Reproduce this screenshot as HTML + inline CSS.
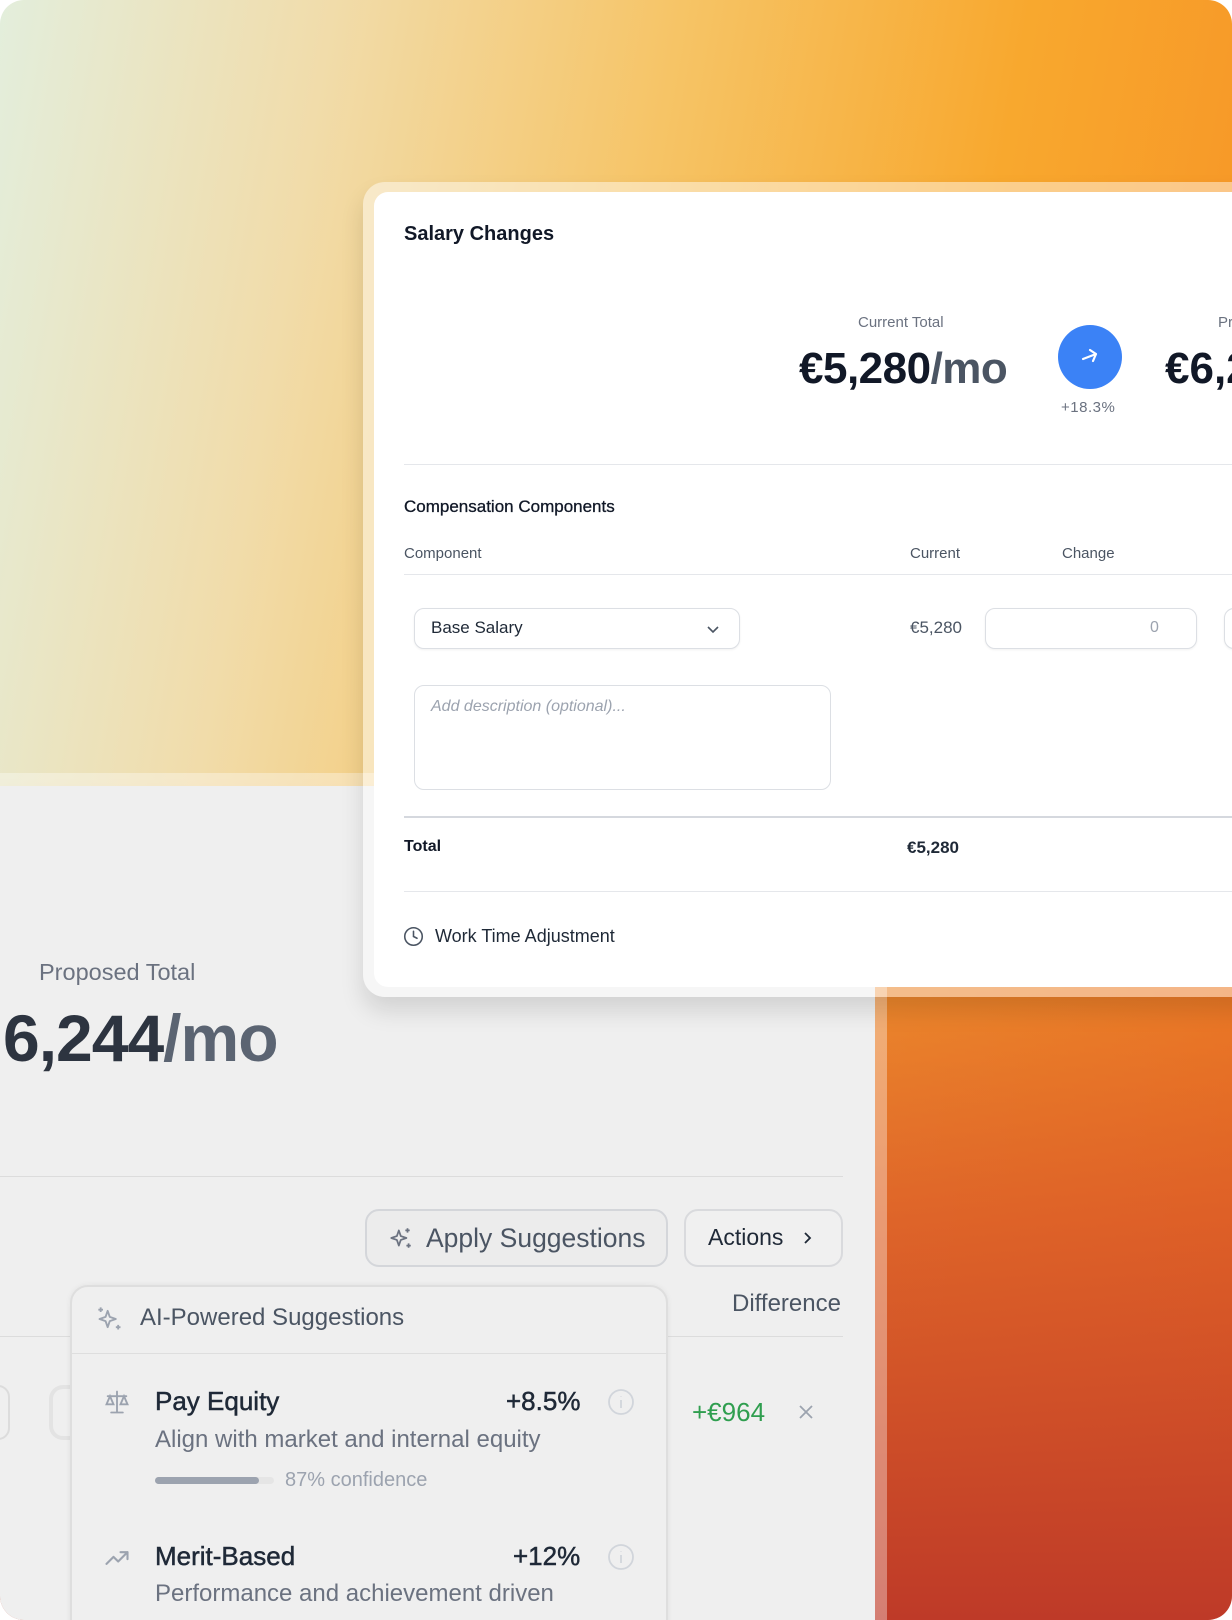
<!DOCTYPE html>
<html><head><meta charset="utf-8"><style>
*{box-sizing:border-box;margin:0;padding:0}
html,body{width:1232px;height:1620px;background:#fff;overflow:hidden;font-family:"Liberation Sans",sans-serif}
.wrap{position:absolute;left:0;top:0;width:1232px;height:1620px;border-radius:24px;overflow:hidden;
background:linear-gradient(to bottom,rgba(0,0,0,0) 48%,rgba(214,80,40,.75) 75%,rgba(190,58,40,1) 100%),linear-gradient(100deg,#e3eedc 0%,#f1dcaa 22%,#f6c466 45%,#f8a82e 68%,#f68a22 100%)}
.panel{position:absolute;left:0;top:773px;width:887px;height:900px;background:rgba(255,255,255,.35)}
.panel2{position:absolute;left:0;top:786px;width:875px;height:900px;background:#efefef}
.abs{position:absolute;white-space:nowrap}
.card{position:absolute;left:363px;top:182px;width:900px;height:815px;border-radius:22px;background:rgba(255,255,255,.45);box-shadow:0 14px 24px rgba(0,0,0,.12)}
.inner{position:absolute;left:374px;top:192px;width:900px;height:795px;border-radius:14px;background:#fff}
.hr{position:absolute;height:1px;background:#e5e7eb}
.dark{color:#111827}
.gray{color:#6b7280}
.box{position:absolute;border:1px solid #dcdfe4;border-radius:10px;background:#fff;box-shadow:0 1px 2px rgba(0,0,0,.06)}
</style></head><body><div class="wrap">
<div class="panel"></div><div class="panel2"></div>

<div class="card"></div>
<div class="inner"></div>
<div class="abs dark" style="left:404px;top:223px;font-size:20px;font-weight:700">Salary Changes</div>
<div class="abs gray" style="left:858px;top:314px;font-size:15px">Current Total</div>
<div class="abs dark" style="left:799px;top:344px;font-size:44px;font-weight:700;letter-spacing:-.5px">€5,280<span style="color:#4b5563;font-weight:600">/mo</span></div>
<div class="abs" style="left:1058px;top:325px;width:64px;height:64px;border-radius:50%;background:#3b82f6"></div>
<svg class="abs" style="left:1078px;top:345px" width="24" height="24" viewBox="0 0 24 24" fill="none" stroke="#fff" stroke-width="2.2" stroke-linecap="round" stroke-linejoin="round"><path d="M5 14 L18 9 M12 5 L18 9 L15 16"/></svg>
<div class="abs gray" style="left:1061px;top:399px;font-size:15px;letter-spacing:.5px">+18.3%</div>
<div class="abs dark" style="left:1165px;top:344px;font-size:44px;font-weight:700">€6,244</div>
<div class="abs gray" style="left:1218px;top:314px;font-size:15px">Proposed</div>
<div class="hr" style="left:404px;top:464px;width:900px"></div>
<div class="abs dark" style="left:404px;top:497px;font-size:17px;color:#111827;-webkit-text-stroke:.3px #111827">Compensation Components</div>
<div class="abs" style="left:404px;top:545px;font-size:15px;color:#4b5563">Component</div>
<div class="abs" style="left:910px;top:545px;font-size:15px;color:#4b5563">Current</div>
<div class="abs" style="left:1062px;top:545px;font-size:15px;color:#4b5563">Change</div>
<div class="hr" style="left:404px;top:574px;width:900px"></div>
<div class="box" style="left:414px;top:608px;width:326px;height:41px"></div>
<div class="abs dark" style="left:431px;top:618px;font-size:17px;color:#1f2937">Base Salary</div>
<svg class="abs" style="left:705px;top:621px" width="16" height="16" viewBox="0 0 16 16" fill="none" stroke="#4b5563" stroke-width="1.6"><path d="M3 6 L8 11 L13 6"/></svg>
<div class="abs" style="left:910px;top:618px;font-size:17px;color:#4b5563">€5,280</div>
<div class="box" style="left:985px;top:608px;width:212px;height:41px"></div>
<div class="abs" style="left:1150px;top:619px;font-size:16px;color:#9ca3af">0</div>
<div class="box" style="left:1224px;top:608px;width:40px;height:41px"></div>
<div class="box" style="left:414px;top:685px;width:417px;height:105px;box-shadow:none"></div>
<div class="abs" style="left:431px;top:698px;font-size:16px;font-style:italic;color:#9ca3af">Add description (optional)...</div>
<div class="abs" style="left:404px;top:816px;width:900px;height:2px;background:#d5d8de"></div>
<div class="abs dark" style="left:404px;top:838px;font-size:16px;font-weight:700">Total</div>
<div class="abs dark" style="left:907px;top:838px;font-size:17px;font-weight:700;color:#1f2937">€5,280</div>
<div class="hr" style="left:404px;top:891px;width:900px"></div>
<svg class="abs" style="left:403px;top:926px" width="21" height="21" viewBox="0 0 24 24" fill="none" stroke="#4b5563" stroke-width="1.8" stroke-linecap="round"><circle cx="12" cy="12" r="10"/><path d="M12 6v6l4 2"/></svg>
<div class="abs dark" style="left:435px;top:926px;font-size:18px;color:#1f2937">Work Time Adjustment</div>

<div class="abs" style="left:39px;top:959px;font-size:23.5px;color:#6b7280">Proposed Total</div>
<div class="abs" style="left:3px;top:1000px;font-size:66px;font-weight:700;color:#2d3440;letter-spacing:-1px">6,244<span style="color:#5b6472;font-weight:600">/mo</span></div>
<div class="hr" style="left:0;top:1176px;width:843px;background:#dcdcdc"></div>

<div class="abs" style="left:365px;top:1209px;width:303px;height:58px;border:2px solid #d4d6da;border-radius:14px;background:#ececec"></div>
<svg class="abs" style="left:388px;top:1225px" width="26" height="26" viewBox="0 0 24 24" fill="none" stroke="#6b7280" stroke-width="1.6" stroke-linejoin="round"><path d="M10 5 L11.8 10.2 L17 12 L11.8 13.8 L10 19 L8.2 13.8 L3 12 L8.2 10.2 Z"/><path d="M18 3v4M16 5h4M19 17v4M17 19h4"/></svg>
<div class="abs" style="left:426px;top:1223px;font-size:26.5px;color:#4b5563">Apply Suggestions</div>
<div class="abs" style="left:684px;top:1209px;width:159px;height:58px;border:2px solid #d9dadd;border-radius:14px;background:#f0f0f0"></div>
<div class="abs" style="left:708px;top:1224px;font-size:23px;color:#1f2937">Actions</div>
<svg class="abs" style="left:800px;top:1229px" width="16" height="18" viewBox="0 0 16 18" fill="none" stroke="#1f2937" stroke-width="1.8"><path d="M5 4 L10 9 L5 14"/></svg>
<div class="abs" style="left:732px;top:1290px;font-size:24px;color:#4b5563">Difference</div>
<div class="hr" style="left:0;top:1336px;width:70px;background:#dcdcdc"></div>
<div class="hr" style="left:668px;top:1336px;width:175px;background:#dcdcdc"></div>
<div class="abs" style="left:-40px;top:1385px;width:50px;height:55px;border:2px solid #dcdcdc;border-radius:12px"></div>
<div class="abs" style="left:49px;top:1385px;width:30px;height:55px;border:4px solid #e3e3e3;border-right:none;border-radius:14px 0 0 14px"></div>
<div class="abs" style="left:692px;top:1397px;font-size:26px;color:#2f9e4f">+€964</div>
<svg class="abs" style="left:797px;top:1403px" width="18" height="18" viewBox="0 0 18 18" stroke="#9ca3af" stroke-width="1.8"><path d="M3 3L15 15M15 3L3 15"/></svg>

<div class="abs" style="left:70px;top:1285px;width:598px;height:400px;border:2px solid #dedede;border-radius:18px;background:#efefef;box-shadow:0 0 6px rgba(0,0,0,.06)"></div>
<svg class="abs" style="left:96px;top:1305px" width="28" height="28" viewBox="0 0 24 24" fill="none" stroke="#9ca3af" stroke-width="1.6" stroke-linejoin="round"><path d="M10 5 L11.8 10.2 L17 12 L11.8 13.8 L10 19 L8.2 13.8 L3 12 L8.2 10.2 Z"/><path d="M4 2v4M2 4h4M19 17v4M17 19h4"/></svg>
<div class="abs" style="left:140px;top:1304px;font-size:24px;color:#4b5563">AI-Powered Suggestions</div>
<div class="hr" style="left:72px;top:1353px;width:594px;background:#dedede"></div>
<svg class="abs" style="left:103px;top:1388px" width="28" height="28" viewBox="0 0 24 24" fill="none" stroke="#9ca3af" stroke-width="1.6" stroke-linecap="round"><path d="M12 3v17M7 21h10M4 7h16M6 7l-3 7h6zM18 7l-3 7h6z"/></svg>
<div class="abs" style="left:155px;top:1386px;font-size:26px;color:#1f2937;-webkit-text-stroke:.5px #1f2937">Pay Equity</div>
<div class="abs" style="left:506px;top:1386px;font-size:26px;color:#1f2937;-webkit-text-stroke:.5px #1f2937">+8.5%</div>
<svg class="abs" style="left:607px;top:1388px" width="28" height="28" viewBox="0 0 28 28" fill="none" stroke="#d1d5db" stroke-width="1.8"><circle cx="14" cy="14" r="12"/><path d="M14 12v8M14 8v.5"/></svg>
<div class="abs" style="left:155px;top:1426px;font-size:24px;color:#6b7280">Align with market and internal equity</div>
<div class="abs" style="left:155px;top:1477px;width:119px;height:7px;border-radius:4px;background:#e5e5e5"></div>
<div class="abs" style="left:155px;top:1477px;width:104px;height:7px;border-radius:4px;background:#9ca3af"></div>
<div class="abs" style="left:285px;top:1469px;font-size:20px;color:#9ca3af">87% confidence</div>
<svg class="abs" style="left:103px;top:1544px" width="28" height="28" viewBox="0 0 24 24" fill="none" stroke="#9ca3af" stroke-width="1.8" stroke-linecap="round" stroke-linejoin="round"><path d="M3 17l6-6 4 4 8-8M15 7h6v6"/></svg>
<div class="abs" style="left:155px;top:1541px;font-size:26px;color:#1f2937;-webkit-text-stroke:.5px #1f2937">Merit-Based</div>
<div class="abs" style="left:513px;top:1541px;font-size:26px;color:#1f2937;-webkit-text-stroke:.5px #1f2937">+12%</div>
<svg class="abs" style="left:607px;top:1543px" width="28" height="28" viewBox="0 0 28 28" fill="none" stroke="#d1d5db" stroke-width="1.8"><circle cx="14" cy="14" r="12"/><path d="M14 12v8M14 8v.5"/></svg>
<div class="abs" style="left:155px;top:1580px;font-size:24px;color:#6b7280">Performance and achievement driven</div>
</div></body></html>
